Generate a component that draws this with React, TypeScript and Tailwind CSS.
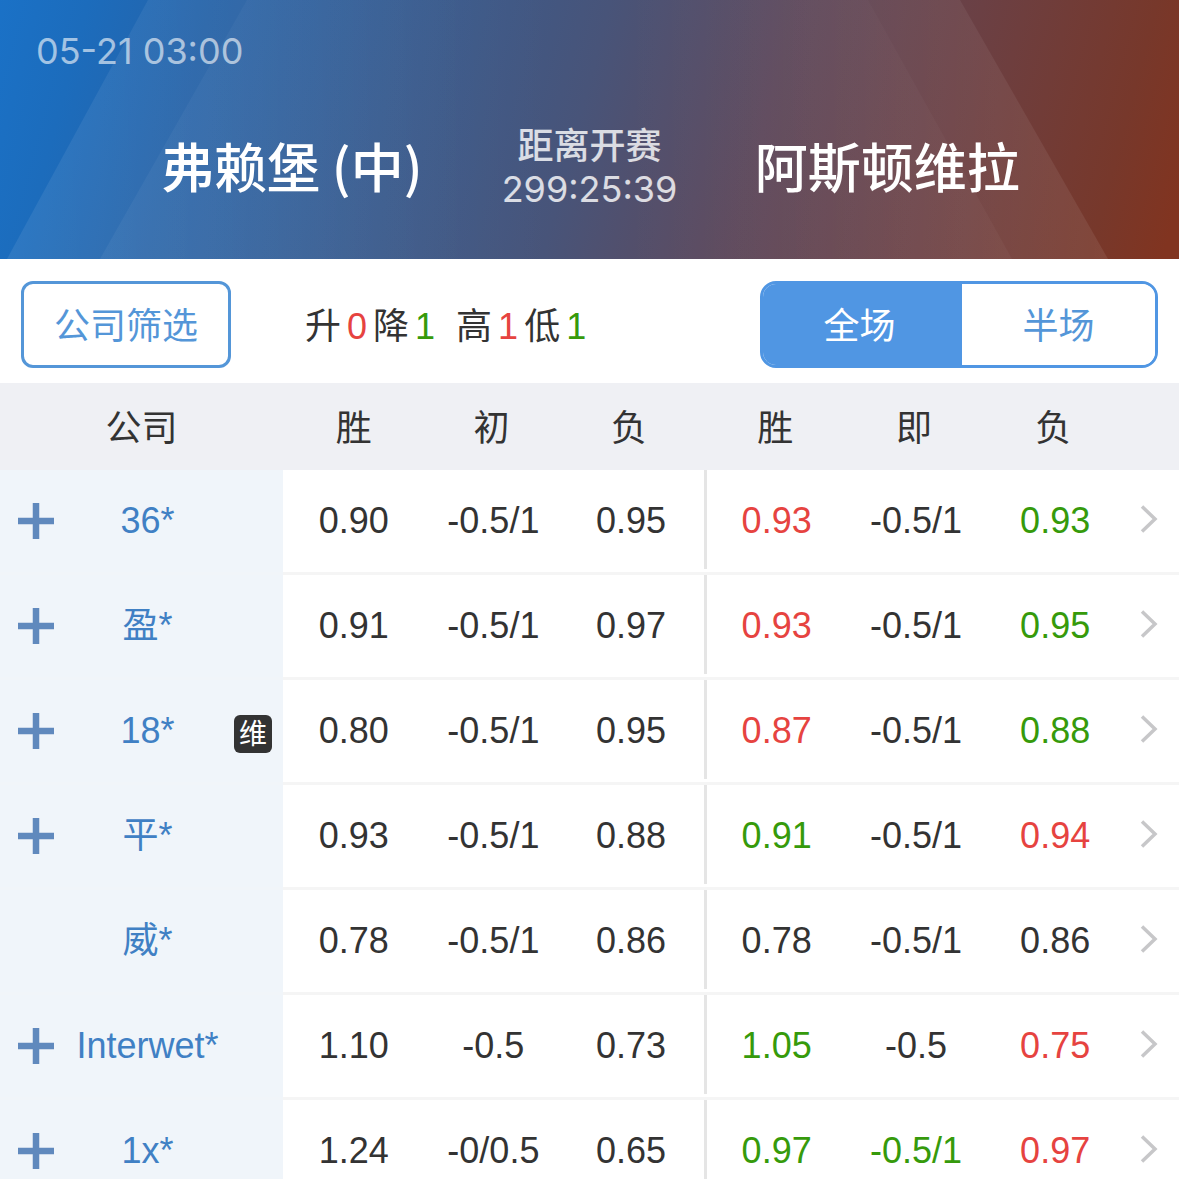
import { useState } from 'react';
import clsx from 'clsx';

type Tone = 'up' | 'down' | 'flat';

interface Odd {
  value: string;
  tone?: Tone;
}

interface Company {
  name: string;
  expandable?: boolean;
  badge?: string;
  initial: string[];
  live: Odd[];
}

const toneClass: Record<Tone, string> = {
  up: 'text-[#e64340]',
  down: 'text-[#369a0b]',
  flat: 'text-[#333333]',
};

const companies: Company[] = [
  {
    name: '36*',
    expandable: true,
    initial: ['0.90', '-0.5/1', '0.95'],
    live: [{ value: '0.93', tone: 'up' }, { value: '-0.5/1' }, { value: '0.93', tone: 'down' }],
  },
  {
    name: '盈*',
    expandable: true,
    initial: ['0.91', '-0.5/1', '0.97'],
    live: [{ value: '0.93', tone: 'up' }, { value: '-0.5/1' }, { value: '0.95', tone: 'down' }],
  },
  {
    name: '18*',
    expandable: true,
    badge: '维',
    initial: ['0.80', '-0.5/1', '0.95'],
    live: [{ value: '0.87', tone: 'up' }, { value: '-0.5/1' }, { value: '0.88', tone: 'down' }],
  },
  {
    name: '平*',
    expandable: true,
    initial: ['0.93', '-0.5/1', '0.88'],
    live: [{ value: '0.91', tone: 'down' }, { value: '-0.5/1' }, { value: '0.94', tone: 'up' }],
  },
  {
    name: '威*',
    initial: ['0.78', '-0.5/1', '0.86'],
    live: [{ value: '0.78' }, { value: '-0.5/1' }, { value: '0.86' }],
  },
  {
    name: 'Interwet*',
    expandable: true,
    initial: ['1.10', '-0.5', '0.73'],
    live: [{ value: '1.05', tone: 'down' }, { value: '-0.5' }, { value: '0.75', tone: 'up' }],
  },
  {
    name: '1x*',
    expandable: true,
    initial: ['1.24', '-0/0.5', '0.65'],
    live: [{ value: '0.97', tone: 'down' }, { value: '-0.5/1', tone: 'down' }, { value: '0.97', tone: 'up' }],
  },
];

const summary: { label: string; count: number; tone: Tone }[][] = [
  [
    { label: '升', count: 0, tone: 'up' },
    { label: '降', count: 1, tone: 'down' },
  ],
  [
    { label: '高', count: 1, tone: 'up' },
    { label: '低', count: 1, tone: 'down' },
  ],
];

const periods = ['全场', '半场'];

const App = () => {
  const [period, setPeriod] = useState(periods[0]);

  return (
    <div className="h-screen w-full overflow-hidden bg-white font-['Liberation_Sans','Noto_Sans_CJK_SC',sans-serif] text-4xl text-[#333333]">
      <MatchHeader />
      <div className="flex items-center px-[21px] pt-[22px] pb-[15px]">
        <button
          type="button"
          className="h-[87px] w-[210px] rounded-xl border-3 border-[#5496d8] pt-1 text-[#5496d8]"
        >
          公司筛选
        </button>
        <div className="ml-[74px] flex gap-[21px] pt-1">
          {summary.map((group) => (
            <p key={group[0].label} className="flex gap-1.5">
              {group.map((item) => (
                <span key={item.label} className="flex gap-1.5">
                  {item.label}
                  <span className={toneClass[item.tone]}>{item.count}</span>
                </span>
              ))}
            </p>
          ))}
        </div>
        <div className="ml-auto flex h-[87px] w-[398px] overflow-hidden rounded-2xl border-3 border-[#5096e3]">
          {periods.map((label) => (
            <button
              key={label}
              type="button"
              aria-pressed={label === period}
              onClick={() => setPeriod(label)}
              className={clsx(
                'pt-1 first:w-[199px] first:pr-1.5 last:flex-1',
                label === period ? 'bg-[#5096e3] text-white' : 'bg-white text-[#5496d8]',
              )}
            >
              {label}
            </button>
          ))}
        </div>
      </div>
      <OddsTable />
    </div>
  );
};

const MatchHeader = () => (
  <header className="relative h-[259px] overflow-hidden text-white">
    <HeaderBackdrop />
    <div className="relative pt-[27px] font-['Inter','Noto_Sans_CJK_SC',sans-serif]">
      <p className="px-9 leading-12 text-white/60">05-21 03:00</p>
      <div className="mt-11 grid grid-cols-[1fr_176px_1fr] items-center px-[82px] text-center">
        <TeamName>弗赖堡 (中)</TeamName>
        <div className="pt-1.5 leading-[43px] whitespace-nowrap text-white/80">
          <p className="font-medium">距离开赛</p>
          <p className="flex justify-center">299:25:39</p>
        </div>
        <TeamName>阿斯顿维拉</TeamName>
      </div>
    </div>
  </header>
);

const TeamName = ({ children }: { children: string }) => (
  <h2 className="font-['Noto_Sans_CJK_SC',sans-serif] text-[53px] leading-[88px] font-medium whitespace-nowrap">
    {children}
  </h2>
);

const HeaderBackdrop = () => (
  <svg
    className="absolute inset-0 h-full w-full"
    viewBox="0 0 1179 259"
    preserveAspectRatio="none"
    aria-hidden="true"
  >
    <defs>
      <linearGradient id="base" gradientUnits="userSpaceOnUse" x1="0" y1="-40" x2="1160" y2="270">
        <stop offset="0" stopColor="#1a72c8" />
        <stop offset="0.08" stopColor="#1c6cbc" />
        <stop offset="0.18" stopColor="#2663a8" />
        <stop offset="0.34" stopColor="#385c90" />
        <stop offset="0.5" stopColor="#485479" />
        <stop offset="0.65" stopColor="#5e495c" />
        <stop offset="0.8" stopColor="#6b4044" />
        <stop offset="0.94" stopColor="#77382b" />
        <stop offset="1" stopColor="#813420" />
      </linearGradient>
      <linearGradient id="fadeRight" x1="0" y1="0" x2="1" y2="0">
        <stop offset="0" stopColor="#ffffff" stopOpacity="0.08" />
        <stop offset="1" stopColor="#ffffff" stopOpacity="0" />
      </linearGradient>
      <linearGradient id="fadeLeft" x1="1" y1="0" x2="0" y2="0">
        <stop offset="0" stopColor="#ffffff" stopOpacity="0.08" />
        <stop offset="1" stopColor="#ffffff" stopOpacity="0" />
      </linearGradient>
    </defs>
    <rect width="1179" height="259" fill="url(#base)" />
    <polygon points="148,0 560,0 560,259 7,259" fill="url(#fadeRight)" />
    <polygon points="247,0 480,0 480,259 100,259" fill="url(#fadeRight)" opacity="0.6" />
    <polygon points="960,0 620,0 620,259 1108,259" fill="url(#fadeLeft)" />
    <polygon points="868,0 700,0 700,259 1012,259" fill="url(#fadeLeft)" opacity="0.4" />
  </svg>
);

const OddsTable = () => (
  <table className="w-full table-fixed border-separate border-spacing-0 text-center">
    <colgroup>
      <col className="w-[24%]" />
      <col className="w-[12%]" />
      <col className="w-[11.7%]" />
      <col className="w-[12%]" />
      <col className="w-[12.1%]" />
      <col className="w-[11.8%]" />
      <col className="w-[11.8%]" />
      <col />
    </colgroup>
    <thead>
      <tr className="bg-[#eff0f4]">
        <th className="h-[87px] p-0 pt-1 font-normal">公司</th>
        <th className="p-0 pt-1 font-normal">胜</th>
        <th className="p-0 pt-1 pr-1 font-normal">初</th>
        <th className="p-0 pt-1 pr-2 font-normal">负</th>
        <th className="p-0 pt-1 font-normal">胜</th>
        <th className="p-0 pt-1 pr-1 font-normal">即</th>
        <th className="p-0 pt-1 pr-1 font-normal">负</th>
        <th aria-label="详情" />
      </tr>
    </thead>
    <tbody>
      {companies.map((company) => (
        <OddsRow key={company.name} company={company} />
      ))}
    </tbody>
  </table>
);

const OddsRow = ({ company }: { company: Company }) => {
  const [home, handicap, away] = company.live;

  return (
    <tr>
      <th className="h-[105px] border-b-3 border-[#f1f5f9] bg-[#f0f5fa] p-0 font-normal text-[#4080c4]">
        <div className="relative flex items-center pr-[42px] pl-[18px]">
          {company.expandable ? (
            <button type="button" aria-label={`展开 ${company.name}`} className="size-9">
              <PlusIcon />
            </button>
          ) : (
            <span className="size-9" />
          )}
          <span className="flex-1">{company.name}</span>
          {company.badge && (
            <span className="absolute right-[11px] mt-1.5 flex size-[38px] items-center justify-center rounded-md bg-[#333333] pt-0.5 text-[28px] leading-none text-white">
              {company.badge}
            </span>
          )}
        </div>
      </th>
      {company.initial.map((value, index) => (
        <td key={index} className={clsx('border-b-3 border-[#f5f5f5] p-0', index === 2 && 'pr-1')}>
          {value}
        </td>
      ))}
      <td className="border-b-3 border-[#f5f5f5] p-0">
        <div
          className={clsx(
            'mb-[3px] flex h-[99px] items-center justify-center border-l-3 border-[#e5e5e5] pt-[3px]',
            toneClass[home.tone ?? 'flat'],
          )}
        >
          {home.value}
        </div>
      </td>
      <td className={clsx('border-b-3 border-[#f5f5f5] p-0', toneClass[handicap.tone ?? 'flat'])}>
        {handicap.value}
      </td>
      <td className={clsx('border-b-3 border-[#f5f5f5] p-0', toneClass[away.tone ?? 'flat'])}>
        {away.value}
      </td>
      <td className="border-b-3 border-[#f5f5f5] p-0">
        <a href="#detail" aria-label={`${company.name} 详情`} className="flex justify-center pr-1.5">
          <ChevronIcon />
        </a>
      </td>
    </tr>
  );
};

const PlusIcon = () => (
  <svg viewBox="0 0 36 36" className="size-9" aria-hidden="true">
    <path d="M18 0v36M0 18h36" stroke="#6089bd" strokeWidth="6.5" fill="none" />
  </svg>
);

const ChevronIcon = () => (
  <svg viewBox="0 0 18 32" className="h-8 w-[18px]" aria-hidden="true">
    <path d="M2 1.500l13 12.500L2 26.500" stroke="#c7c7c9" strokeWidth="3.500" fill="none" />
  </svg>
);

export default App;
